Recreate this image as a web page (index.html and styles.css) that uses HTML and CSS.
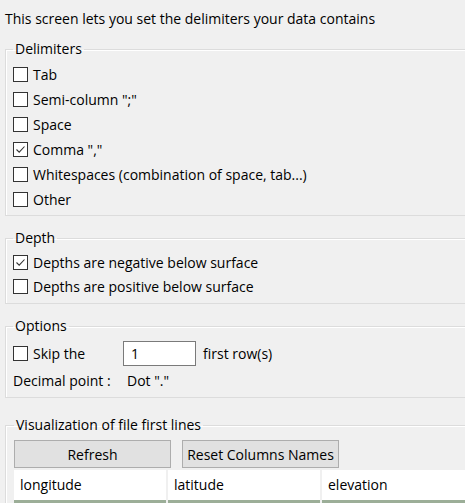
FILE: index.html
```html
<!DOCTYPE html>
<html>
<head>
<meta charset="utf-8">
<link rel="stylesheet" href="styles.css">
</head>
<body>
<div class="page">
  <p class="intro">This screen lets you set the delimiters your data contains</p>

  <fieldset class="group group-delims">
    <legend>Delimiters</legend>
    <label class="row"><span class="box"></span>Tab</label>
    <label class="row"><span class="box"></span>Semi-column ";"</label>
    <label class="row"><span class="box"></span>Space</label>
    <label class="row"><span class="box checked"><svg viewBox="0 0 13 13" width="13" height="13"><path d="M2.5 6.5 L5.2 9.2 L10.5 3.5" fill="none" stroke="#333" stroke-width="1.1"/></svg></span>Comma ","</label>
    <label class="row"><span class="box"></span>Whitespaces (combination of space, tab...)</label>
    <label class="row"><span class="box"></span>Other</label>
  </fieldset>

  <fieldset class="group group-depth">
    <legend>Depth</legend>
    <label class="row"><span class="box checked"><svg viewBox="0 0 13 13" width="13" height="13"><path d="M2.5 6.5 L5.2 9.2 L10.5 3.5" fill="none" stroke="#333" stroke-width="1.1"/></svg></span>Depths are negative below surface</label>
    <label class="row"><span class="box"></span>Depths are positive below surface</label>
  </fieldset>

  <fieldset class="group group-options">
    <legend>Options</legend>
    <div class="row skip">
      <label class="skip-label"><span class="box"></span>Skip the</label>
      <span class="input">1</span>
      <span>first row(s)</span>
    </div>
    <div class="row decimal">
      <span class="dec-label">Decimal point :</span>
      <span>Dot "."</span>
    </div>
  </fieldset>

  <fieldset class="group group-vis">
    <legend>Visualization of file first lines</legend>
    <div class="buttons">
      <span class="btn btn-refresh">Refresh</span>
      <span class="btn btn-reset">Reset Columns Names</span>
    </div>
    <div class="table">
      <div class="col"><div class="th">longitude</div><div class="bar"></div></div>
      <div class="col"><div class="th">latitude</div><div class="bar"></div></div>
      <div class="col col-last"><div class="th">elevation</div><div class="bar"></div></div>
    </div>
  </fieldset>
</div>
</body>
</html>
```
FILE: styles.css
```css
html, body {
  margin: 0;
  padding: 0;
  background: #f0f0f0;
  overflow: hidden;
}
body {
  font-family: "Open Sans", "Noto Sans", sans-serif;
  font-size: 14px;
  color: #000;
  width: 465px;
  height: 503px;
}
.page {
  padding: 0 0 0 5px;
}
.intro {
  margin: 0;
  padding-top: 9px;
  line-height: 20px;
  height: 31px;
}
.group {
  margin: 0;
  border: 1px solid #dcdcdc;
  border-right: none;
  box-shadow: inset 1px 1px 0 #fff;
  padding: 0 0 0 7px;
  min-width: 0;
}
.group legend {
  padding: 0 2px;
  margin-left: 0;
  line-height: 18px;
  height: 18px;
}
.row {
  display: flex;
  align-items: center;
  height: 25px;
  white-space: nowrap;
}
.box {
  width: 13px;
  height: 13px;
  border: 1px solid #333;
  background: #fff;
  margin-right: 5px;
  flex: none;
  display: flex;
}
.group-delims {
  padding-top: 4px;
  padding-bottom: 3px;
}
.group-depth {
  margin-top: 13px;
  padding-top: 3px;
  padding-bottom: 5px;
}
.group-depth .row {
  height: 24px;
}
.group-options {
  margin-top: 13px;
  padding-top: 4px;
  padding-bottom: 3px;
}
.skip {
  height: 28px;
}
.skip-label {
  display: flex;
  align-items: center;
  width: 110px;
}
.input {
  box-sizing: border-box;
  width: 73px;
  height: 25px;
  border: 1px solid #7a7a7a;
  background: #fff;
  padding-left: 7px;
  line-height: 23px;
  margin-right: 7px;
}
.decimal {
  height: 27px;
}
.dec-label {
  width: 114px;
}
.group-vis {
  margin-top: 18px;
  padding: 6px 0 0 8px;
  height: 100px;
}
.buttons {
  display: flex;
  gap: 11px;
}
.btn {
  box-sizing: border-box;
  height: 28px;
  border: 1px solid #adadad;
  background: #e1e1e1;
  display: flex;
  align-items: center;
  justify-content: center;
}
.btn-refresh {
  width: 157px;
}
.btn-reset {
  width: 157px;
}
.table {
  display: flex;
  margin-top: 2px;
  gap: 2px;
}
.col {
  width: 152px;
  flex: none;
}
.col-last {
  width: 145px;
}
.th {
  background: #fff;
  height: 30px;
  line-height: 30px;
  padding-left: 6px;
}
.bar {
  height: 6px;
  background: #9cae98;
}
```
